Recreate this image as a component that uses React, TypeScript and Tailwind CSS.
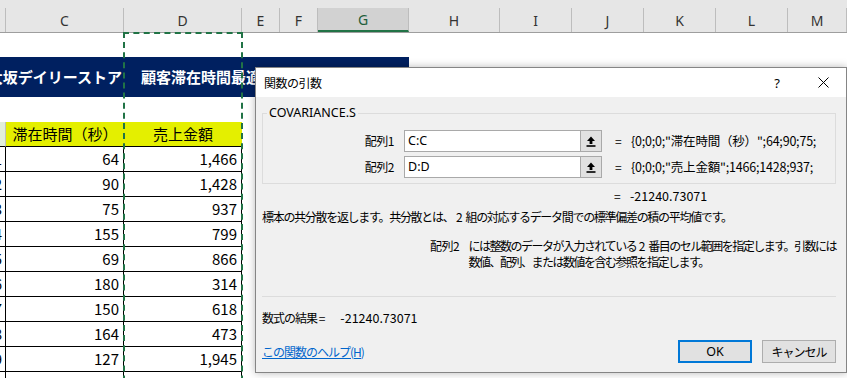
import React from "react";

const COLS = "grid grid-cols-[6px_118px_118px_38px_38px_91px_91px_72px_72px_72px_72px_59px]";

const data: [string, string, string][] = [
  ["1", "64", "1,466"],
  ["2", "90", "1,428"],
  ["3", "75", "937"],
  ["4", "155", "799"],
  ["5", "69", "866"],
  ["6", "180", "314"],
  ["7", "150", "618"],
  ["8", "164", "473"],
  ["9", "127", "1,945"],
];

function UpIcon() {
  return (
    <svg width="10" height="11" viewBox="0 0 10 11">
      <path d="M5 0.5 L9 5 H6.4 V8 H3.6 V5 H1 Z" fill="#000" />
      <rect x="0.5" y="9.2" width="9" height="1.6" fill="#000" />
    </svg>
  );
}

function FieldRow({ label, value, result }: { label: string; value: string; result: string }) {
  return (
    <div className="flex items-center h-[22px]">
      <div className="w-[131px] text-right tracking-[-0.5px]">{label}</div>
      <div className="ml-[10px] w-[198px] h-[22px] border border-[#a9a9a9] bg-white flex items-center">
        <span className="pl-[3px] text-[12.5px] font-['Noto_Sans',sans-serif]">{value}</span>
        <div className="ml-auto h-[20px] w-[21px] border-l border-[#a9a9a9] bg-[#e1e1e1] flex items-center justify-center">
          <UpIcon />
        </div>
      </div>
      <div className="ml-[13px] w-[8px]">=</div>
      <div className="ml-[8px] whitespace-nowrap text-[12.5px] tracking-[-0.2px]">{result}</div>
    </div>
  );
}

export default function App() {
  const letters = ["", "C", "D", "E", "F", "G", "H", "I", "J", "K", "L", "M"];
  return (
    <div className="relative w-[847px] h-[378px] overflow-hidden bg-white font-['Noto_Sans_CJK_JP',sans-serif] text-black">
      {/* column headers */}
      <div className={`${COLS} h-[33px] bg-[#e6e6e6] border-b border-[#9e9e9e]`}>
        {letters.map((l, i) => (
          <div key={i} className="h-[32px] flex flex-col">
            <div
              className={
                "mt-[8px] h-[24px] flex items-center justify-center text-[14px] font-['Noto_Sans',sans-serif] " +
                (l === "G"
                  ? "bg-[#d2d2d2] text-[#1e5e3a] border-b-2 border-[#217346] border-r border-r-[#bdbdbd]"
                  : "text-[#333] border-r border-[#bdbdbd]")
              }
            >
              {l}
            </div>
          </div>
        ))}
      </div>

      {/* row 1 */}
      <div className="h-[24px]" />

      {/* row 2 navy title */}
      <div className={`${COLS} h-[40px]`}>
        <div className="col-span-2 bg-[#002060] overflow-hidden flex items-center justify-end pr-[2px]">
          <span className="whitespace-nowrap text-white font-bold text-[15px]">大坂デイリーストア</span>
        </div>
        <div className="col-span-4 bg-[#002060] overflow-hidden flex items-center pl-[17px]">
          <span className="whitespace-nowrap text-white font-bold text-[15px]">顧客滞在時間最適化分析</span>
        </div>
      </div>

      {/* row 3 */}
      <div className="h-[25px]" />

      {/* row 4 yellow header */}
      <div className={`${COLS} h-[25px]`}>
        <div className="bg-[#e2efda] border-r border-[#bfbfbf] border-b border-b-black" />
        <div className="bg-[#e4ef00] border-b border-black flex items-center justify-center text-[15px]">滞在時間（秒）</div>
        <div className="bg-[#e4ef00] border-b border-black flex items-center justify-center text-[15px]">売上金額</div>
      </div>

      {/* data rows */}
      {data.map(([n, a, b]) => (
        <div key={n} className={`${COLS} h-[25px]`}>
          <div className="border-r border-b border-black overflow-hidden flex items-center justify-end pr-[3px] text-[15px]">
            <span className="whitespace-nowrap">{n}</span>
          </div>
          <div className="border-r border-b border-black flex items-center justify-end pr-[4px] text-[15px]">{a}</div>
          <div className="border-r border-b border-black flex items-center justify-end pr-[4px] text-[15px]">{b}</div>
        </div>
      ))}
      <div className={`${COLS} h-[25px]`}>
        <div className="border-r border-black" />
        <div className="border-r border-black" />
        <div className="border-r border-black" />
      </div>

      {/* copy marquee */}
      <div className="absolute left-[123px] top-[32px] w-[120px] h-[400px] border-2 border-dashed border-[#217346]" />

      {/* dialog */}
      <div className="absolute left-[255px] top-[67px] w-[592px] h-[306px] border border-[#858585] bg-[#f0f0f0] shadow-[0_0_8px_rgba(0,0,0,0.28)] flex flex-col text-[12px] leading-[16px]">
        <div className="h-[29px] bg-white flex items-center pl-[8px]">
          <span className="tracking-[-0.5px]">関数の引数</span>
          <div className="ml-auto w-[46px] h-full flex items-center justify-center text-[13px] font-['Noto_Sans',sans-serif]">?</div>
          <div className="w-[46px] h-full flex items-center justify-center">
            <svg width="11" height="11" viewBox="0 0 11 11">
              <path d="M0.5 0.5 L10.5 10.5 M10.5 0.5 L0.5 10.5" stroke="#000" strokeWidth="1" />
            </svg>
          </div>
        </div>
        <div className="flex-1 pl-[6px] pr-[10px] flex flex-col">
          {/* group box */}
          <div className="relative mt-[16px] h-[71px] border border-[#dcdcdc] pt-[16px]">
            <div className="absolute left-[4px] top-[-9px] px-[2px] bg-[#f0f0f0] font-['Noto_Sans',sans-serif] text-[12.5px]">COVARIANCE.S</div>
            <FieldRow label="配列1" value="C:C" result={'{0;0;0;"滞在時間（秒）";64;90;75;'} />
            <div className="h-[4px]" />
            <FieldRow label="配列2" value="D:D" result={'{0;0;0;"売上金額";1466;1428;937;'} />
          </div>
          <div className="mt-[4px] h-[16px] flex">
            <div className="ml-[352px] w-[8px]">=</div>
            <div className="ml-[8px] text-[12.5px]">-21240.73071</div>
          </div>
          <div className="mt-[5px] h-[16px] whitespace-nowrap tracking-[-1.3px]">
            標本の共分散を返します。共分散とは、<span className="tracking-normal">&nbsp;2&nbsp;</span>組の対応するデータ間での標準偏差の積の平均値です。
          </div>
          <div className="mt-[13px] flex">
            <div className="ml-[168px] w-[40px] tracking-[-0.5px]">配列2</div>
            <div className="whitespace-nowrap tracking-[-1.5px]">
              には整数のデータが入力されている<span className="tracking-normal">&nbsp;2&nbsp;</span>番目のセル範囲を指定します。引数には
              <br />
              数値、配列、または数値を含む参照を指定します。
            </div>
          </div>
          <div className="mt-[26px] h-px bg-[#dcdcdc]" />
          <div className="mt-[13px] h-[16px] flex whitespace-nowrap">
            <span className="tracking-[-1px]">数式の結果 =</span>
            <span className="ml-[16px] text-[12.5px]">-21240.73071</span>
          </div>
          <div className="mt-[14px] flex items-center">
            <span className="text-[#0066cc] underline tracking-[-1px] whitespace-nowrap">この関数のヘルプ(H)</span>
            <div className="ml-auto w-[74px] h-[23px] border-2 border-[#0078d7] bg-[#e1e1e1] flex items-center justify-center font-['Noto_Sans',sans-serif] text-[12.5px]">OK</div>
            <div className="ml-[10px] w-[74px] h-[23px] border border-[#adadad] bg-[#e1e1e1] flex items-center justify-center tracking-[-1px]">キャンセル</div>
          </div>
        </div>
      </div>
    </div>
  );
}
